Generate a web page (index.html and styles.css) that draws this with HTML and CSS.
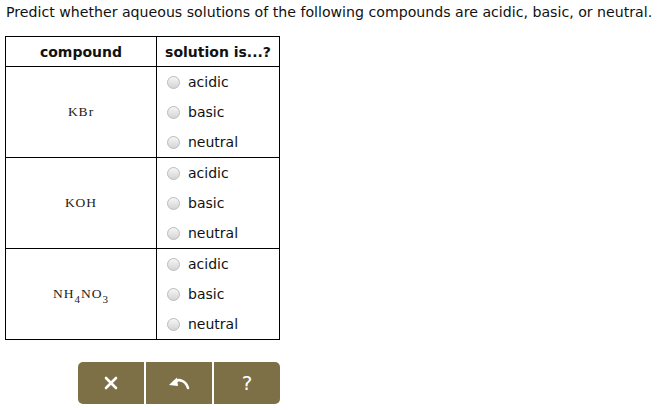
FILE: index.html
```html
<!DOCTYPE html>
<html lang="en">
<head>
  <meta charset="UTF-8">
  <title>Acidic, basic or neutral</title>
  <link rel="stylesheet" href="styles.css">
</head>
<body>
  <p class="prompt">Predict whether aqueous solutions of the following compounds are acidic, basic, or neutral.</p>

  <table class="grid">
    <tr>
      <th class="col-compound">compound</th>
      <th class="col-answer">solution is...?</th>
    </tr>
    <tr>
      <td class="compound">KBr</td>
      <td class="answers">
        <label class="choice"><span class="radio"></span>acidic</label>
        <label class="choice"><span class="radio"></span>basic</label>
        <label class="choice"><span class="radio"></span>neutral</label>
      </td>
    </tr>
    <tr>
      <td class="compound">KOH</td>
      <td class="answers">
        <label class="choice"><span class="radio"></span>acidic</label>
        <label class="choice"><span class="radio"></span>basic</label>
        <label class="choice"><span class="radio"></span>neutral</label>
      </td>
    </tr>
    <tr>
      <td class="compound">NH<sub>4</sub>NO<sub>3</sub></td>
      <td class="answers">
        <label class="choice"><span class="radio"></span>acidic</label>
        <label class="choice"><span class="radio"></span>basic</label>
        <label class="choice"><span class="radio"></span>neutral</label>
      </td>
    </tr>
  </table>

  <div class="toolbar">
    <button class="tool" title="Clear">
      <svg width="14" height="14" viewBox="0 0 14 14"><path d="M2 2 L12 12 M12 2 L2 12" stroke="#fff" stroke-width="2.6" stroke-linecap="round"/></svg>
    </button>
    <button class="tool" title="Undo">
      <svg width="22" height="14" viewBox="0 0 22 14"><path d="M20 12 C18 5 11 2 6 6" stroke="#fff" stroke-width="2.6" fill="none" stroke-linecap="round"/><path d="M1 9 L9 1.5 L10 10 Z" fill="#fff"/></svg>
    </button>
    <button class="tool help" title="Help">?</button>
  </div>
</body>
</html>
```

FILE: styles.css
```css
body {
  margin: 0;
  padding: 4px 5px;
  font-family: "DejaVu Sans", Verdana, sans-serif;
  color: #111;
  background: #fff;
}
.prompt {
  margin: 0;
  font-size: 14.15px;
  line-height: 17px;
  padding-left: 1px;
}
.grid {
  margin-top: 15px;
  border-collapse: collapse;
  font-size: 14px;
}
.grid th,
.grid td {
  border: 1px solid #000;
  padding: 0;
}
.grid th {
  height: 29px;
  font-weight: bold;
  text-align: center;
}
.col-compound {
  width: 150px;
}
.col-answer {
  width: 122px;
}
.compound {
  text-align: center;
  font-family: "Liberation Serif", "Times New Roman", serif;
  font-size: 13.5px;
  letter-spacing: 1px;
  color: #222;
}
.compound sub {
  font-size: 11px;
  vertical-align: -5px;
  line-height: 0;
}
.answers {
  height: 90px;
}
.choice {
  display: flex;
  align-items: center;
  height: 30px;
  padding-left: 10px;
  font-size: 14px;
}
.radio {
  width: 13px;
  height: 13px;
  border-radius: 50%;
  border: 1px solid #bcbcbc;
  background: linear-gradient(#f6f6f6, #d4d4d4);
  margin-right: 8px;
  box-sizing: border-box;
}
.toolbar {
  display: flex;
  width: 202px;
  height: 42px;
  margin: 22px 0 0 73px;
  border-radius: 5px;
  overflow: hidden;
}
.tool {
  flex: 1;
  border: 0;
  background: #7d7046;
  color: #fff;
  display: flex;
  align-items: center;
  justify-content: center;
  padding: 0;
}
.tool + .tool {
  border-left: 2px solid #fff;
}
.help {
  font-family: "DejaVu Sans", sans-serif;
  font-size: 20px;
}
```
